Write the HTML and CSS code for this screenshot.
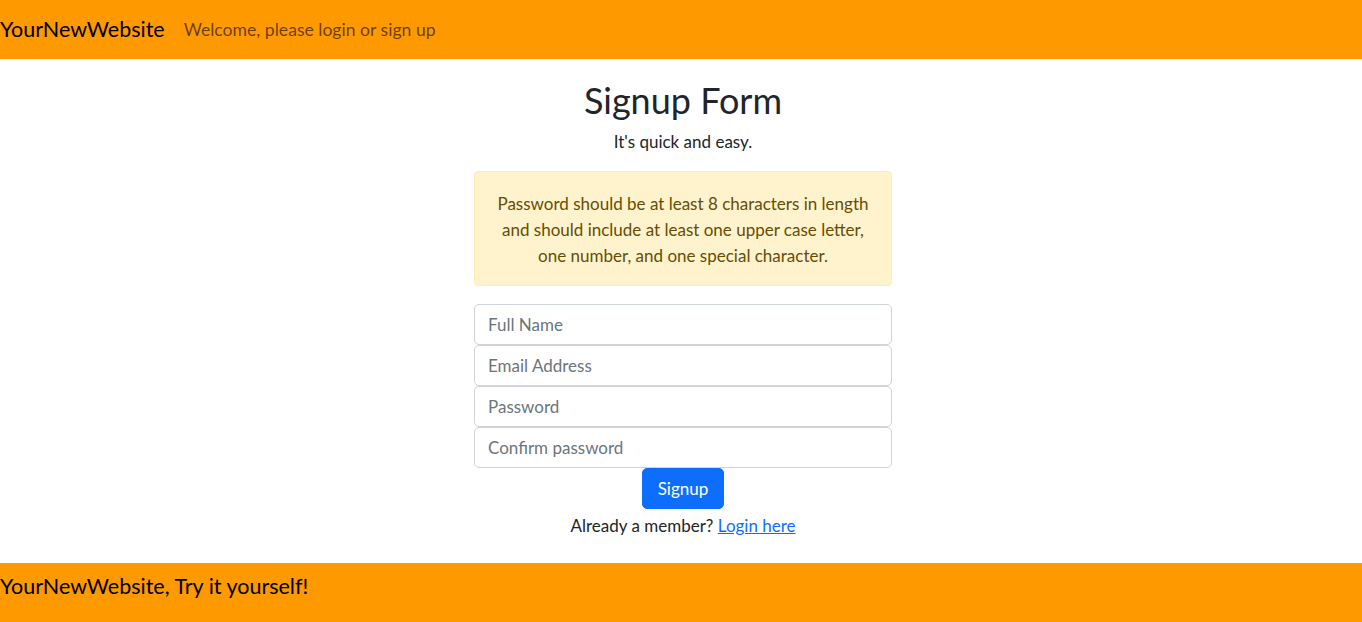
FILE: index.html
```html
<!DOCTYPE html>
<html lang="en">
<head>
<meta charset="utf-8">
<title>Signup</title>
<link rel="stylesheet" href="styles.css">
</head>
<body>
<header class="navbar">
  <span class="brand">YourNewWebsite</span>
  <span class="nav-link">Welcome, please login or sign up</span>
</header>
<main class="main">
  <h1 class="title">Signup Form</h1>
  <p class="subtitle">It's quick and easy.</p>
  <div class="alert">Password should be at least 8 characters in length and should include at least one upper case letter, one number, and one special character.</div>
  <form class="form">
    <input class="field" type="text" placeholder="Full Name">
    <input class="field" type="email" placeholder="Email Address">
    <input class="field" type="password" placeholder="Password">
    <input class="field" type="password" placeholder="Confirm password">
    <button class="btn" type="button">Signup</button>
  </form>
  <p class="member">Already a member? <a href="#" class="link">Login here</a></p>
</main>
<footer class="footer">YourNewWebsite, Try it yourself!</footer>
</body>
</html>
```
FILE: styles.css
```css
* { box-sizing: border-box; }
html, body { margin: 0; padding: 0; }
body {
  font-family: "Lato", "Noto Sans", sans-serif;
  color: #212529;
  background: #fff;
  font-size: 16px;
  font-weight: 400;
}
.navbar {
  height: 59px;
  background: #ff9900;
  display: flex;
  align-items: center;
  padding-bottom: 1px;
}
.brand {
  font-size: 21.5px;
  color: #000;
  margin-right: 19px;
}
.nav-link {
  font-size: 17.6px;
  color: rgba(0,0,0,0.6);
}
.main {
  display: flex;
  flex-direction: column;
  align-items: center;
  padding-top: 18px;
  padding-left: 4px;
  height: 504px;
}
.title {
  margin: 0;
  font-size: 36px;
  font-weight: 400;
  line-height: 46px;
}
.subtitle {
  margin: 7px 0 0;
  font-size: 17px;
  line-height: 24px;
}
.alert {
  margin-top: 17px;
  width: 418px;
  background: #fff3cd;
  border: 1px solid #ffecb5;
  border-radius: 4px;
  color: #664d03;
  text-align: center;
  font-size: 17px;
  line-height: 26px;
  padding: 19px 16px 16px;
}
.form {
  margin-top: 18px;
  width: 418px;
  display: flex;
  flex-direction: column;
  align-items: center;
  gap: 0;
}
.field {
  width: 100%;
  height: 41px;
  border: 1px solid #ced4da;
  border-radius: 5px;
  padding: 0 13px;
  font-family: inherit;
  font-size: 17px;
  color: #212529;
  background: #fff;
}
.field::placeholder { color: #6c757d; }
.btn {
  width: 82px;
  height: 41px;
  background: #0d6efd;
  border: 1px solid #0d6efd;
  border-radius: 5px;
  color: #fff;
  font-family: inherit;
  font-size: 17px;
  padding: 0;
}
.member {
  margin: 5px 0 0;
  font-size: 17px;
  line-height: 24px;
}
.link { color: #0d6efd; text-decoration: underline; }
.footer {
  height: 59px;
  background: #ff9900;
  font-size: 21.5px;
  color: #000;
  padding-top: 10px;
}
```
